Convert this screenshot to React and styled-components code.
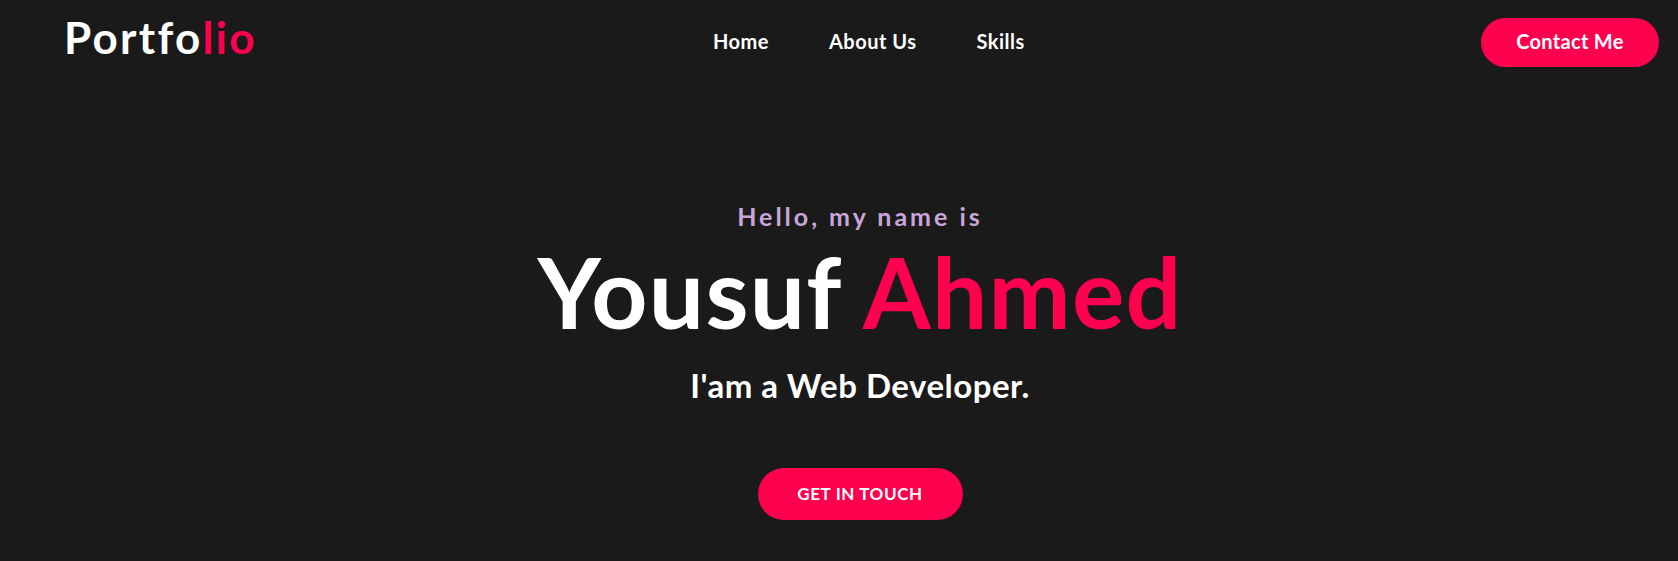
import React from "react";
import styled, { createGlobalStyle } from "styled-components";

const Global = createGlobalStyle`
  * { box-sizing: border-box; }
  html, body { margin: 0; padding: 0; background: #1a1a1a; }
  body { font-family: Lato, "Open Sans", sans-serif; color: #fff; }
`;

const Page = styled.div`
  min-height: 561px;
  background: #1a1a1a;
`;

const Header = styled.header`
  height: 85px;
  padding: 0 19px 0 64px;
  display: flex;
  align-items: center;
  justify-content: space-between;
`;

const Logo = styled.div`
  font-size: 44px;
  line-height: 1;
  font-weight: 700;
  letter-spacing: 2.3px;
  color: #fff;
  margin-bottom: 12px;
  span { color: #ff004f; }
`;

const Nav = styled.nav`
  display: flex;
  gap: 60px;
  margin-bottom: 4px;
`;

const NavLink = styled.a`
  font-size: 20px;
  line-height: 1;
  font-weight: 700;
  letter-spacing: 0.5px;
  color: #fff;
  text-decoration: none;
`;

const PillButton = styled.a`
  display: flex;
  align-items: center;
  justify-content: center;
  width: ${(p) => p.$w}px;
  height: ${(p) => p.$h}px;
  border-radius: 30px;
  background: #ff004f;
  color: #fff;
  font-weight: 700;
  font-size: ${(p) => p.$fs}px;
  line-height: 1;
  text-decoration: none;
  text-transform: ${(p) => (p.$upper ? "uppercase" : "none")};
  letter-spacing: ${(p) => p.$ls || 0}px;
  padding-bottom: ${(p) => p.$pb || 0}px;
`;

const Hero = styled.section`
  display: flex;
  flex-direction: column;
  align-items: center;
  padding: 119px 0 0 42px;
`;

const Hello = styled.p`
  margin: 0;
  font-size: 25px;
  line-height: 1;
  font-weight: 700;
  letter-spacing: 3px;
  color: #c9a6d9;
`;

const Name = styled.h1`
  margin: 13px 0 0;
  font-size: 98px;
  line-height: 1;
  font-weight: 700;
  letter-spacing: 1.3px;
  color: #fff;
  span { color: #ff004f; }
`;

const Role = styled.h3`
  margin: 29px 0 0;
  font-size: 33px;
  line-height: 1;
  font-weight: 700;
  letter-spacing: 0.5px;
  color: #fff;
`;

const CtaWrap = styled.div`
  margin-top: 66px;
`;

export default function App() {
  return (
    <Page>
      <Global />
      <Header>
        <Logo>
          Portfo<span>lio</span>
        </Logo>
        <Nav>
          <NavLink href="#">Home</NavLink>
          <NavLink href="#">About Us</NavLink>
          <NavLink href="#">Skills</NavLink>
        </Nav>
        <PillButton href="#" $w={178} $h={49} $fs={20} $ls={0.3} $pb={3}>
          Contact Me
        </PillButton>
      </Header>
      <Hero>
        <Hello>Hello, my name is</Hello>
        <Name>
          Yousuf <span>Ahmed</span>
        </Name>
        <Role>I'am a Web Developer.</Role>
        <CtaWrap>
          <PillButton href="#" $w={205} $h={52} $fs={17} $ls={0.6} $upper $pb={2}>
            Get in touch
          </PillButton>
        </CtaWrap>
      </Hero>
    </Page>
  );
}
